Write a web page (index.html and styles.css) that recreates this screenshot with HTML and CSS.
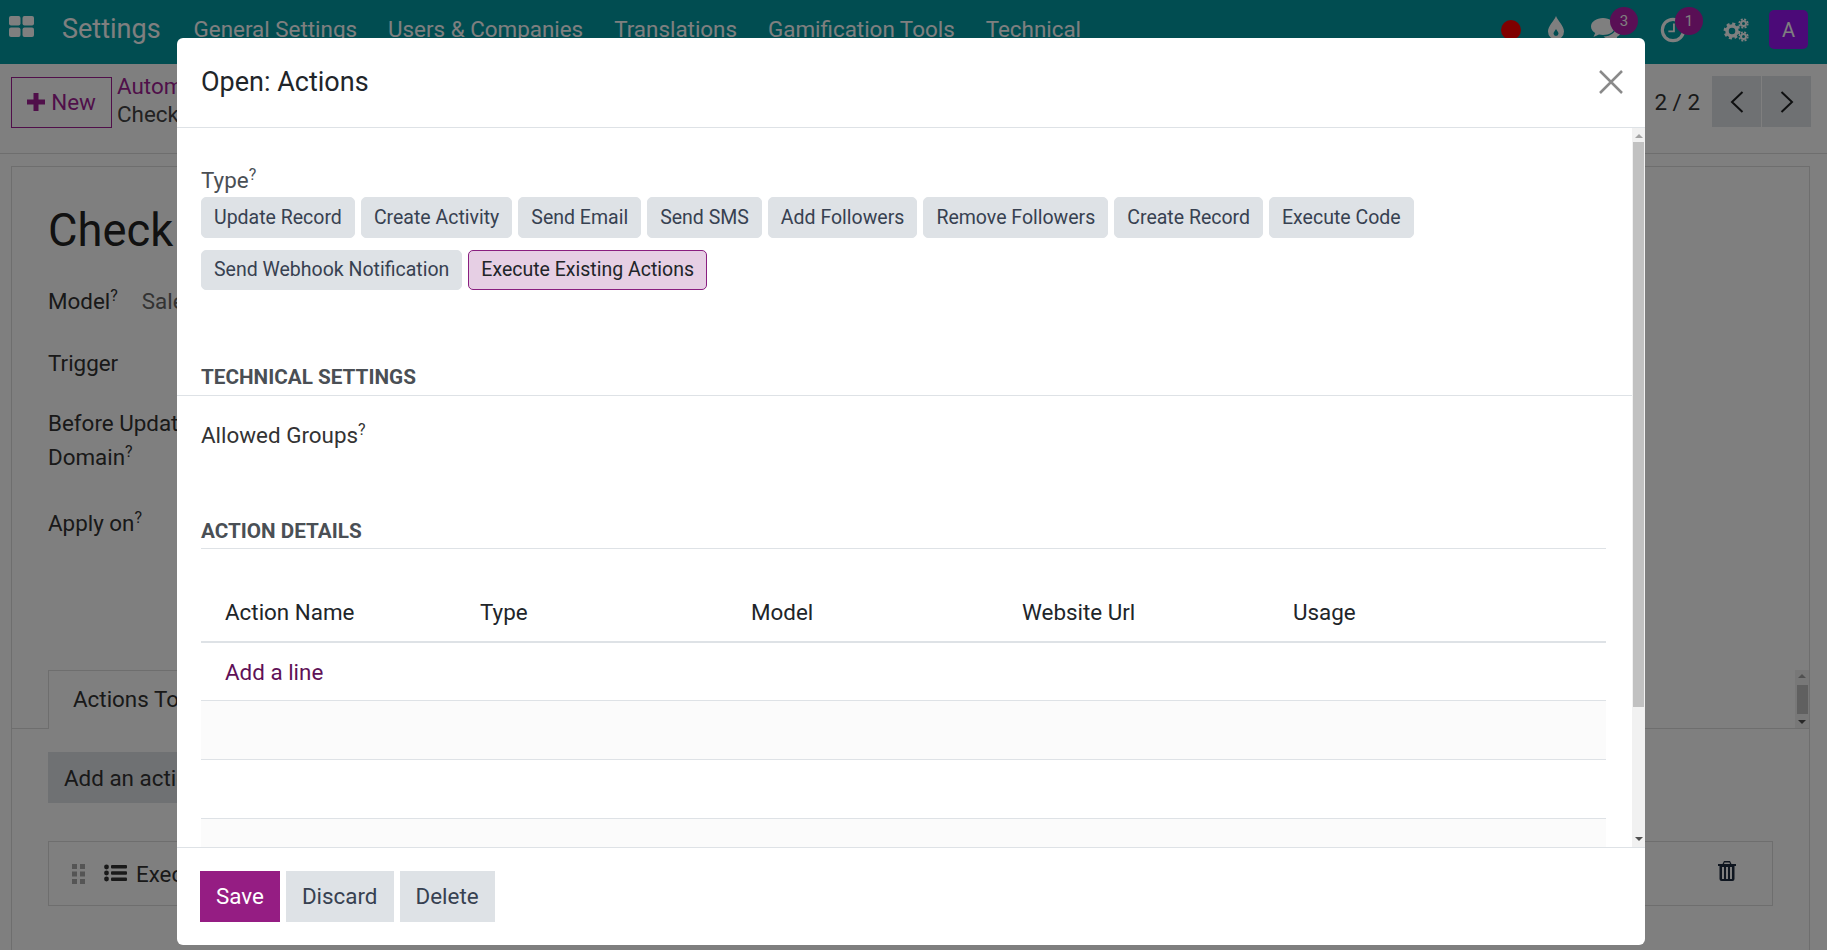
FILE: index.html
```html
<!DOCTYPE html>
<html lang="en">
<head>
    <meta charset="UTF-8">
    <title>Open: Actions</title>
    <link rel="stylesheet" href="styles.css">
</head>
<body>
    <div class="navbar">
        <svg class="apps-icon" width="26" height="22" viewBox="0 0 26 22">
            <rect x="0" y="0" width="11.5" height="9.5" rx="2"/>
            <rect x="13.5" y="0" width="11.5" height="9.5" rx="2"/>
            <rect x="0" y="11.5" width="11.5" height="9.5" rx="2"/>
            <rect x="13.5" y="11.5" width="11.5" height="9.5" rx="2"/>
        </svg>
        <div class="brand">Settings</div>
        <div class="menu">
            <span>General Settings</span>
            <span>Users &amp; Companies</span>
            <span>Translations</span>
            <span>Gamification Tools</span>
            <span>Technical</span>
        </div>
        <div class="systray">
            <span class="record-dot"></span>
            <svg class="tray-drop" width="18" height="24" viewBox="0 0 18 24">
                <path fill-rule="evenodd" d="M9 0C11 5 17 10 17 15.500A8 8 0 0 1 1 15.500C1 10 7 5 9 0ZM9 13C8 15 6.500 16 6.500 17.500A2.500 2.500 0 0 0 11.500 17.500C11.500 16 10 15 9 13Z"/>
            </svg>
            <div class="tray-item tray-chat">
                <svg width="30" height="26" viewBox="0 0 30 26">
                    <path d="M12 1C5.500 1 0 4.600 0 9.500C0 12.300 1.700 14.500 4.200 16L2.500 20L8 17.500C9.200 17.800 10.500 18 12 18C18.500 18 24 14.500 24 9.500C24 4.600 18.500 1 12 1Z"/>
                    <path d="M25.500 8.500C26 14.500 20 19.500 12.500 19.500C14.500 21.500 17.500 22 20.500 21.500L27 24.500L25.800 20C28.500 18.500 30 16.500 30 14C30 11.800 28 9.800 25.500 8.500Z"/>
                </svg>
                <span class="tray-badge">3</span>
            </div>
            <div class="tray-item tray-clock">
                <svg class="clock-icon" width="26" height="26" viewBox="0 0 28 28">
                    <circle cx="14" cy="14" r="11.500" stroke-width="3.400"/>
                    <path d="M15 7V15.500H9" stroke-width="2"/>
                </svg>
                <span class="tray-badge tray-badge-clock">1</span>
            </div>
            <svg class="tray-gears" width="26" height="24" viewBox="0 0 26 24">
                <circle cx="9" cy="13" r="5" stroke-width="3.500"/>
                <circle cx="9" cy="13" r="7.200" stroke-width="2.500" stroke-dasharray="3 2.650"/>
                <circle cx="20.500" cy="5.500" r="2.500" stroke-width="2"/>
                <circle cx="20.500" cy="5.500" r="4.300" stroke-width="1.600" stroke-dasharray="2 1.400"/>
                <circle cx="20.500" cy="18.500" r="2.500" stroke-width="2"/>
                <circle cx="20.500" cy="18.500" r="4.300" stroke-width="1.600" stroke-dasharray="2 1.400"/>
            </svg>
            <div class="avatar">A</div>
        </div>
    </div>

    <div class="control-panel">
        <button class="new-button">
            <svg width="18" height="18" viewBox="0 0 18 18"><path d="M6.500 0H11.500V6.500H18V11.500H11.500V18H6.500V11.500H0V6.500H6.500Z"/></svg>
            New
        </button>
        <div class="breadcrumb">
            <a href="#">Automation Rules</a>
            <div>Check</div>
        </div>
        <div class="pager">
            <span class="pager-value">2 / 2</span>
            <div class="pager-buttons">
                <button class="pager-button">
                    <svg width="14" height="24" viewBox="0 0 14 24" fill="none" stroke="#1d1f21" stroke-width="2"><path d="M12.500 2L2 12L12.500 22"/></svg>
                </button>
                <button class="pager-button">
                    <svg width="14" height="24" viewBox="0 0 14 24" fill="none" stroke="#1d1f21" stroke-width="2"><path d="M1.500 2L12 12L1.500 22"/></svg>
                </button>
            </div>
        </div>
    </div>

    <div class="sheet">
        <div class="sheet-title">Check</div>
        <div class="sheet-field field-model"><span>Model<sup>?</sup></span><span class="sheet-value">Sales Order</span></div>
        <div class="sheet-field field-trigger">Trigger</div>
        <div class="sheet-field field-domain">Before Update<br>Domain<sup>?</sup></div>
        <div class="sheet-field field-apply">Apply on<sup>?</sup></div>
        <div class="tabs">
            <div class="tab">Actions To Do</div>
            <div class="mini-scroll">
                <span class="arrow-up"></span>
                <span class="mini-thumb"></span>
                <span class="arrow-down"></span>
            </div>
        </div>
        <button class="add-action">Add an action</button>
        <div class="action-row">
            <svg class="drag-icon" width="14" height="20" viewBox="0 0 14 20">
                <rect x="0" y="0" width="5" height="5"/><rect x="8" y="0" width="5" height="5"/>
                <rect x="0" y="7.500" width="5" height="5"/><rect x="8" y="7.500" width="5" height="5"/>
                <rect x="0" y="15" width="5" height="5"/><rect x="8" y="15" width="5" height="5"/>
            </svg>
            <svg class="list-icon" width="23" height="18" viewBox="0 0 23 18">
                <circle cx="2.500" cy="3" r="2.400"/><rect x="7" y="1" width="16" height="3.600" rx="1"/>
                <circle cx="2.500" cy="9" r="2.400"/><rect x="7" y="7.200" width="16" height="3.600" rx="1"/>
                <circle cx="2.500" cy="15" r="2.400"/><rect x="7" y="13.400" width="16" height="3.600" rx="1"/>
            </svg>
            <span class="action-name">Execute Code</span>
            <svg class="trash-icon" width="18" height="20" viewBox="0 0 18 20">
                <path fill-rule="evenodd" d="M6 0H12L13.500 3H18V5H16.500V18A2 2 0 0 1 14.500 20H3.500A2 2 0 0 1 1.500 18V5H0V3H4.500ZM6.500 1.500L6 3H12L11.500 1.500ZM4 6V18H6V6ZM8 6V18H10V6ZM12 6V18H14V6Z"/>
            </svg>
        </div>
    </div>

    <div class="backdrop">
        <div class="modal">
            <div class="modal-header">
                <div class="modal-title">Open: Actions</div>
                <svg class="modal-close" width="24" height="24" viewBox="0 0 24 24" fill="none" stroke="#8a8a8a" stroke-width="2.500">
                    <path d="M1 1L23 23M23 1L1 23"/>
                </svg>
            </div>

            <div class="modal-body">
                <div class="modal-content">
                    <div class="field-label">Type<sup>?</sup></div>
                    <div class="type-list">
                        <span class="type-pill">Update Record</span>
                        <span class="type-pill">Create Activity</span>
                        <span class="type-pill">Send Email</span>
                        <span class="type-pill">Send SMS</span>
                        <span class="type-pill">Add Followers</span>
                        <span class="type-pill">Remove Followers</span>
                        <span class="type-pill">Create Record</span>
                        <span class="type-pill">Execute Code</span>
                        <span class="type-pill pill-short">Send Webhook Notification</span>
                        <span class="type-pill pill-short selected">Execute Existing Actions</span>
                    </div>

                    <div class="section-title section-wide">TECHNICAL SETTINGS</div>
                    <div class="groups-label">Allowed Groups<sup>?</sup></div>

                    <div class="section-title section-details">ACTION DETAILS</div>
                    <table class="details-table">
                        <thead>
                            <tr>
                                <th class="col-name">Action Name</th>
                                <th class="col-mid">Type</th>
                                <th class="col-mid">Model</th>
                                <th class="col-mid">Website Url</th>
                                <th>Usage</th>
                            </tr>
                        </thead>
                        <tbody>
                            <tr class="add-row"><td colspan="5"><a href="#" class="add-line">Add a line</a></td></tr>
                            <tr><td colspan="5"></td></tr>
                            <tr><td colspan="5"></td></tr>
                            <tr><td colspan="5"></td></tr>
                        </tbody>
                    </table>
                </div>
                <div class="scrollbar">
                    <span class="arrow-up"></span>
                    <span class="scroll-thumb"></span>
                    <span class="arrow-down"></span>
                </div>
            </div>

            <div class="modal-footer">
                <button class="footer-button primary">Save</button>
                <button class="footer-button">Discard</button>
                <button class="footer-button">Delete</button>
            </div>
        </div>
    </div>
</body>
</html>
```

FILE: styles.css
```css
body {
    font-family: Roboto, "Liberation Sans", sans-serif;
    font-size: 22.4px;
    margin: 0;
    height: 950px;
    overflow: hidden;
    background-color: #fff;
    color: #374151;
}

sup {
    font-size: 16px;
    line-height: 0;
}

button {
    font-family: inherit;
    border: none;
}

/* page behind the dialog */
.navbar {
    height: 64px;
    background-color: #029aa3;
    display: flex;
    align-items: center;
    padding-left: 9px;
    color: #fff;
}

.apps-icon {
    fill: #fff;
    margin-top: -11px;
}

.brand {
    font-size: 27px;
    margin-left: 27px;
    margin-top: -7px;
    color: #fff;
}

.menu {
    display: flex;
    gap: 31px;
    margin-left: 33px;
    margin-top: -7px;
}

.systray {
    margin-left: auto;
    display: flex;
    align-items: center;
    margin-top: -5px;
    padding-right: 19px;
}

.record-dot {
    width: 20px;
    height: 20px;
    border-radius: 50%;
    background-color: #ff0000;
    margin-right: 26px;
}

.tray-drop {
    fill: #fff;
    margin-right: 26px;
    margin-top: -4px;
}

.tray-item {
    position: relative;
    display: flex;
}

.tray-item svg {
    fill: #fff;
}

.tray-chat {
    margin-right: 39px;
}

.tray-clock {
    margin-right: 37px;
}

.tray-item .clock-icon {
    fill: none;
    stroke: #fff;
}

.tray-badge {
    position: absolute;
    top: -10px;
    left: 19px;
    width: 28px;
    height: 28px;
    border-radius: 50%;
    background-color: #b21eaa;
    color: #fff;
    font-size: 15px;
    display: flex;
    align-items: center;
    justify-content: center;
}

.tray-badge-clock {
    left: 15px;
}

.tray-gears {
    fill: none;
    stroke: #fff;
    margin-right: 20px;
}

.avatar {
    width: 39px;
    height: 39px;
    border-radius: 5px;
    background-color: #9614f0;
    color: #fff;
    font-size: 20px;
    display: flex;
    align-items: center;
    justify-content: center;
}

.control-panel {
    height: 90px;
    box-sizing: border-box;
    border-bottom: 1px solid #dcdcdc;
    display: flex;
    align-items: flex-start;
    padding: 12px 16px 0 11px;
}

.new-button {
    width: 101px;
    height: 51px;
    background-color: #fff;
    border: 1px solid #a01f94;
    color: #a01f94;
    font-size: 22.4px;
    padding: 0 0 2px;
    margin-top: 1px;
    display: flex;
    align-items: center;
    justify-content: center;
    gap: 6px;
}

.new-button svg {
    fill: #a01f94;
}

.breadcrumb {
    margin-left: 5px;
    line-height: 28px;
    margin-top: -4px;
    color: #444;
}

.breadcrumb a {
    color: #a01f94;
    text-decoration: none;
    white-space: nowrap;
}

.pager {
    margin-left: auto;
    display: flex;
    align-items: center;
    gap: 12px;
}

.pager-value {
    color: #333;
}

.pager-buttons {
    display: flex;
    gap: 1px;
}

.pager-button {
    width: 49px;
    height: 51px;
    background-color: #dee2e6;
    padding: 0;
    display: flex;
    align-items: center;
    justify-content: center;
}

.sheet {
    margin: 12px 17px 0 11px;
    height: 784px;
    box-sizing: border-box;
    border: 1px solid #dcdcdc;
    border-bottom: none;
    padding: 36px 36px 0;
    color: #333;
}

.sheet-title {
    font-size: 45.3px;
    line-height: 56px;
    color: #222;
}

.sheet-field {
    line-height: 34px;
}

.field-model {
    margin-top: 25px;
    display: flex;
    gap: 24px;
}

.sheet-value {
    color: #666;
}

.field-trigger {
    margin-top: 28px;
}

.field-domain {
    margin-top: 26px;
}

.field-apply {
    margin-top: 32px;
}

.tabs {
    margin: 130px -36px 0;
    padding-left: 36px;
    height: 58px;
    border-bottom: 1px solid #dcdcdc;
    display: flex;
    justify-content: space-between;
}

.tab {
    width: 350px;
    height: 59px;
    border: 1px solid #dcdcdc;
    border-bottom: none;
    background-color: #fff;
    padding-left: 24px;
    line-height: 56px;
    box-sizing: border-box;
}

.mini-scroll {
    width: 14px;
    height: 58px;
    background-color: #f1f1f1;
    display: flex;
    flex-direction: column;
    align-items: center;
    justify-content: space-between;
    padding: 4px 0;
    box-sizing: border-box;
}

.mini-thumb {
    width: 11px;
    height: 29px;
    background-color: #c1c1c1;
}

.add-action {
    display: block;
    margin-top: 23px;
    height: 51px;
    width: 300px;
    background-color: #dee2e6;
    color: #333;
    font-size: 22.4px;
    text-align: left;
    padding-left: 16px;
}

.action-row {
    margin-top: 38px;
    height: 65px;
    border: 1px solid #dcdcdc;
    box-sizing: border-box;
    display: flex;
    align-items: center;
    padding: 0 36px 0 23px;
    width: 1725px;
}

.drag-icon {
    fill: #aaa;
}

.list-icon {
    fill: #333;
    margin-left: 18px;
    margin-top: -2px;
}

.action-name {
    margin-left: 9px;
}

.trash-icon {
    margin-left: auto;
    fill: #1f2d40;
    margin-top: -6px;
}

/* dialog */
.backdrop {
    position: absolute;
    top: 0;
    left: 0;
    width: 100%;
    height: 950px;
    background-color: rgba(0, 0, 0, 0.5);
    padding: 38px 0 0 177px;
    box-sizing: border-box;
}

.modal {
    width: 1468px;
    height: 907px;
    background-color: #fff;
    border-radius: 6px;
    display: flex;
    flex-direction: column;
    overflow: hidden;
}

.modal-header {
    height: 90px;
    flex-shrink: 0;
    box-sizing: border-box;
    border-bottom: 1px solid #dee2e6;
    display: flex;
    align-items: center;
    justify-content: space-between;
    padding: 0 22px 0 24px;
}

.modal-title {
    font-size: 27px;
    color: #212529;
    margin-top: -1px;
}

.modal-close {
    margin-top: -2px;
}

.modal-body {
    height: 719px;
    flex-shrink: 0;
    display: flex;
    overflow: hidden;
}

.modal-content {
    flex: 1;
    padding: 37px 26px 0 24px;
    overflow: hidden;
}

.field-label {
    line-height: 31px;
    color: #4a4f55;
}

.type-list {
    display: flex;
    flex-wrap: wrap;
    column-gap: 6px;
    row-gap: 12px;
    width: 1290px;
    margin-top: 1px;
}

.type-pill {
    font-size: 19.5px;
    height: 41px;
    line-height: 39px;
    padding: 0 12px;
    box-sizing: border-box;
    background-color: #dee2e6;
    border: 1px solid #dee2e6;
    border-radius: 5px;
    color: #374151;
    white-space: nowrap;
}

.pill-short {
    height: 40px;
    line-height: 37px;
}

.type-pill.selected {
    background-color: #e6cfe4;
    border-color: #8a1f80;
    color: #212529;
}

.section-title {
    font-weight: 700;
    font-size: 20.7px;
    line-height: 28px;
    color: #4a4f55;
    padding-bottom: 3px;
    border-bottom: 1px solid #dee2e6;
}

.section-wide {
    margin: 73px -26px 0 -24px;
    padding: 0 0 4px 24px;
}

.groups-label {
    line-height: 30px;
    margin-top: 24px;
    color: #333;
}

.section-details {
    margin-top: 67px;
}

.details-table {
    width: 100%;
    margin-top: 34px;
    border-collapse: collapse;
    table-layout: fixed;
}

.details-table th {
    height: 59px;
    text-align: left;
    font-weight: 400;
    padding: 0 0 0 24px;
    box-sizing: border-box;
    color: #212529;
    border-bottom: 2px solid #dee2e6;
}

.col-name {
    width: 255px;
}

.col-mid {
    width: 271px;
}

.details-table td {
    height: 58px;
    padding: 0 0 0 24px;
    border-bottom: 1px solid #dee2e6;
}

.details-table .add-row td {
    height: 57px;
}

.details-table tbody tr:nth-child(even) {
    background-color: #fbfbfb;
}

.add-line {
    color: #5f1157;
    text-decoration: none;
}

.scrollbar {
    width: 13px;
    background-color: #f1f1f1;
    display: flex;
    flex-direction: column;
    align-items: center;
    padding-top: 6px;
    box-sizing: border-box;
    flex-shrink: 0;
}

.scroll-thumb {
    width: 11px;
    height: 565px;
    margin-top: 4px;
    background-color: #c1c1c1;
}

.arrow-up,
.arrow-down {
    width: 0;
    height: 0;
    border-left: 4px solid transparent;
    border-right: 4px solid transparent;
}

.arrow-up {
    border-bottom: 4px solid #a3a3a3;
}

.arrow-down {
    border-top: 4px solid #505050;
}

.scrollbar .arrow-down {
    margin-top: auto;
    margin-bottom: 6px;
}

.modal-footer {
    flex: 1;
    border-top: 1px solid #dee2e6;
    display: flex;
    gap: 6px;
    padding: 23px 0 0 23px;
    box-sizing: border-box;
}

.footer-button {
    height: 51px;
    padding: 0 16px 2px;
    font-size: 22.4px;
    background-color: #dee2e6;
    color: #374151;
}

.footer-button.primary {
    background-color: #951d83;
    color: #fff;
}
```
